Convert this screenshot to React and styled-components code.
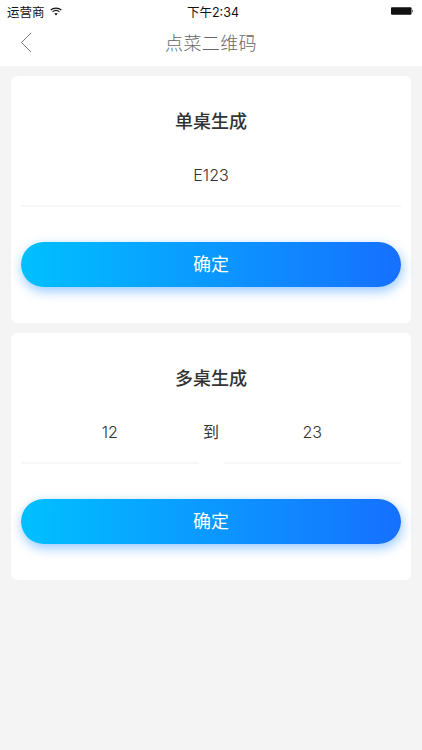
import styled, { createGlobalStyle } from "styled-components";

const GlobalStyle = createGlobalStyle`
  html, body {
    margin: 0;
    padding: 0;
    background: #f4f4f4;
    font-family: "Inter", "Liberation Sans", "Noto Sans CJK SC", sans-serif;
  }
`;

const Page = styled.div`
  width: 422px;
  height: 750px;
  overflow: hidden;
  background: #f4f4f4;
`;

const Header = styled.div`
  height: 65.5px;
  background: #fff;
`;

const StatusBar = styled.div`
  height: 22px;
  padding: 0 9px 0 7px;
  display: grid;
  grid-template-columns: 180px auto 1fr;
  align-items: center;
  font-size: 12.5px;
  color: #111;
`;

const Carrier = styled.div`
  display: flex;
  align-items: center;
  gap: 5px;
`;

const Battery = styled.div`
  justify-self: end;
  display: flex;
  align-items: center;
`;

const NavBar = styled.div`
  position: relative;
  height: 43.5px;
  box-sizing: border-box;
  padding-bottom: 4px;
  display: flex;
  align-items: center;
  justify-content: center;
  font-size: 18px;
  font-weight: 300;
  color: #666;
  letter-spacing: 0.4px;
`;

const Back = styled.svg`
  position: absolute;
  left: 20px;
  top: 10px;
`;

const Content = styled.div`
  padding: 10px 11px 0;
  display: flex;
  flex-direction: column;
  gap: 10px;
`;

const Card = styled.div`
  height: 247px;
  box-sizing: border-box;
  padding: 0 10px;
  background: #fff;
  border-radius: 6px;
  display: flex;
  flex-direction: column;
`;

const Title = styled.div`
  margin-top: 33px;
  height: 26px;
  line-height: 26px;
  text-align: center;
  font-size: 18px;
  font-weight: 500;
  color: #333;
`;

const Fields = styled.div`
  margin-top: 27px;
  display: flex;
`;

const Field = styled.div`
  flex: 1;
  height: 45px;
  line-height: 26px;
  text-align: center;
  font-size: 16px;
  color: #333;
  border-bottom: 2px solid #f6f6f6;
  box-sizing: border-box;
  font-weight: 300;
`;

const Separator = styled.div`
  width: 25px;
  flex: none;
  line-height: 26px;
  text-align: center;
  font-size: 16px;
  font-weight: 400;
  color: #333;
`;

const Submit = styled.div`
  margin-top: 35px;
  height: 45px;
  border-radius: 23px;
  background: linear-gradient(90deg, #00c0ff 0%, #1670ff 100%);
  box-shadow: 1px 4px 12px rgba(20, 130, 255, 0.45);
  display: flex;
  align-items: center;
  justify-content: center;
  font-size: 18px;
  color: #fff;
  padding-bottom: 2px;
  box-sizing: border-box;
`;

const Wifi = () => (
  <svg width="12" height="9" viewBox="0 0 12 9">
    <path d="M.7 3C3.700.4 8.300.4 11.300 3" fill="none" stroke="#111" strokeWidth="1.200" />
    <path d="M2.600 4.900c2-1.700 4.800-1.700 6.800 0" fill="none" stroke="#111" strokeWidth="1.200" />
    <path d="M4.300 6.600L6 8.500l1.700-1.900c-1-.8-2.400-.8-3.400 0z" fill="#111" />
  </svg>
);

const BatteryIcon = () => (
  <svg width="22" height="8" viewBox="0 0 22 8">
    <rect x="0" y="0.300" width="20.500" height="7.400" rx="1" fill="#111" />
    <rect x="21" y="2.800" width="1" height="2.400" fill="#777" />
  </svg>
);

const QrCard = ({ title, children }) => (
  <Card>
    <Title>{title}</Title>
    <Fields>{children}</Fields>
    <Submit>确定</Submit>
  </Card>
);

export default function App() {
  return (
    <Page>
      <GlobalStyle />
      <Header>
        <StatusBar>
          <Carrier>
            运营商
            <Wifi />
          </Carrier>
          <div>下午2:34</div>
          <Battery>
            <BatteryIcon />
          </Battery>
        </StatusBar>
        <NavBar>
          <Back width="12" height="21" viewBox="0 0 12 21">
            <path d="M11 1L1.500 10.500 11 20" fill="none" stroke="#777" strokeWidth="1" />
          </Back>
          点菜二维码
        </NavBar>
      </Header>
      <Content>
        <QrCard title="单桌生成">
          <Field>E123</Field>
        </QrCard>
        <QrCard title="多桌生成">
          <Field>12</Field>
          <Separator>到</Separator>
          <Field>23</Field>
        </QrCard>
      </Content>
    </Page>
  );
}
